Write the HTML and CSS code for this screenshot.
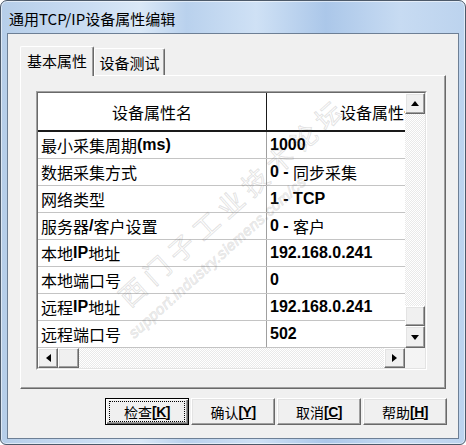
FILE: index.html
```html
<!DOCTYPE html>
<html lang="zh-CN">
<head>
  <meta charset="UTF-8">
  <title>通用TCP/IP设备属性编辑</title>
  <link rel="stylesheet" href="styles.css">
</head>
<body>

<div class="window">
  <div class="titlebar">通用TCP/IP设备属性编辑</div>

  <div class="client">
    <div class="tabs">
      <div class="tab active">基本属性</div>
      <div class="tab second">设备测试</div>
    </div>

    <div class="tab-body">
      <div class="grid">
        <div class="grid-inner">
          <div class="grid-main">
            <div class="grid-view">
              <div class="row head">
                <div class="cell">设备属性名</div>
                <div class="cell">设备属性值</div>
              </div>
              <div class="row">
                <div class="cell">最小采集周期<b>(ms)</b></div>
                <div class="cell"><b>1000</b></div>
              </div>
              <div class="row">
                <div class="cell">数据采集方式</div>
                <div class="cell"><b>0 -</b>&nbsp;同步采集</div>
              </div>
              <div class="row">
                <div class="cell">网络类型</div>
                <div class="cell"><b>1 - TCP</b></div>
              </div>
              <div class="row">
                <div class="cell">服务器<b>/</b>客户设置</div>
                <div class="cell"><b>0 -</b>&nbsp;客户</div>
              </div>
              <div class="row">
                <div class="cell">本地<b>IP</b>地址</div>
                <div class="cell"><b>192.168.0.241</b></div>
              </div>
              <div class="row">
                <div class="cell">本地端口号</div>
                <div class="cell"><b>0</b></div>
              </div>
              <div class="row">
                <div class="cell">远程<b>IP</b>地址</div>
                <div class="cell"><b>192.168.0.241</b></div>
              </div>
              <div class="row">
                <div class="cell">远程端口号</div>
                <div class="cell"><b>502</b></div>
              </div>
            </div>

            <!-- vertical scrollbar -->
            <div class="vscroll">
              <div class="sbtn up"><span class="arr arr-up"></span></div>
              <div class="track vtrack">
                <div class="sbtn vthumb"></div>
              </div>
              <div class="sbtn down"><span class="arr arr-down"></span></div>
            </div>
          </div>

          <!-- horizontal scrollbar -->
          <div class="hscroll">
            <div class="sbtn left"><span class="arr arr-left"></span></div>
            <div class="sbtn hthumb"></div>
            <div class="track htrack"></div>
            <div class="sbtn right"><span class="arr arr-right"></span></div>
            <div class="corner"></div>
          </div>
        </div>
      </div>

      <!-- forum watermark -->
      <div class="watermark">
        <span class="wm-big">西门子工业技术论坛</span>
        <span class="wm-small">support.industry.siemens.com/cs</span>
      </div>
    </div>

    <div class="actions">
      <div class="btn default">检查<b>[<u>K</u>]</b></div>
      <div class="btn">确认<b>[<u>Y</u>]</b></div>
      <div class="btn">取消<b>[<u>C</u>]</b></div>
      <div class="btn">帮助<b>[<u>H</u>]</b></div>
    </div>
  </div>
</div>

</body>
</html>
```

FILE: styles.css
```css
/* Base */
* {
  box-sizing: border-box;
}

body {
  margin: 0;
  background: #ffffff;
  font-family: "Liberation Sans", "Noto Sans CJK SC", sans-serif;
  color: #000;
}

b {
  font-family: "Liberation Sans", sans-serif;
  font-weight: bold;
}

/* Window frame (aero) */
.window {
  width: 466px;
  height: 445px;
  border: 1px solid #4d5a6a;
  border-radius: 7px 7px 6px 6px;
  background: linear-gradient(90deg, #b6cee9 0%, #c9dcf2 18%, #dae8f7 30%, #b9d1ed 40%, #cfe1f5 55%, #abc7e9 70%, #c7dbf2 86%, #bcd3ee 100%);
  box-shadow: inset 0 0 0 1px rgba(255, 255, 255, 0.55);
  padding: 0 6px 5px 6px;
  display: flex;
  flex-direction: column;
  overflow: hidden;
}

.titlebar {
  height: 32px;
  padding: 3px 0 0 2px;
  display: flex;
  align-items: center;
  font-family: "Noto Sans CJK SC", sans-serif;
  font-size: 15px;
  white-space: nowrap;
}

.client {
  flex: 1;
  border: 1px solid #6d7f95;
  background: #f0f0f0;
  padding: 12px 12px 0 12px;
  display: flex;
  flex-direction: column;
}

/* Tabs */
.tabs {
  display: flex;
  align-items: flex-end;
  height: 29px;
  position: relative;
  z-index: 2;
}

.tab {
  height: 27px;
  border: 1px solid;
  border-color: #fff #696969 transparent #fff;
  border-bottom: none;
  border-radius: 2px 2px 0 0;
  box-shadow: inset -1px 0 #a0a0a0;
  background: #f0f0f0;
  font-family: "Noto Sans CJK SC", sans-serif;
  font-size: 15px;
  display: flex;
  align-items: center;
  justify-content: center;
}

.tab.active {
  width: 74px;
  height: 30px;
  margin-bottom: -1px;
  padding-bottom: 2px;
}

.tab.second {
  width: 71px;
  padding-top: 1px;
}

.tab-body {
  width: 426px;
  height: 314px;
  border: 1px solid;
  border-color: #fff #696969 #696969 #fff;
  box-shadow: inset -1px -1px #a0a0a0;
  padding: 15px;
  position: relative;
}

/* Property grid */
.grid {
  width: 391px;
  height: 279px;
  border: 1px solid;
  border-color: #a0a0a0 #fff #fff #a0a0a0;
}

.grid-inner {
  height: 100%;
  border: 1px solid;
  border-color: #696969 #e3e3e3 #e3e3e3 #696969;
  display: flex;
  flex-direction: column;
}

.grid-main {
  display: flex;
  height: 255px;
}

.grid-view {
  width: 367px;
  overflow: hidden;
  background: #fff;
}

.row {
  display: grid;
  grid-template-columns: 229px 226px;
  width: 455px;
  height: 27px;
  border-bottom: 1px solid #c4c4c4;
}

.cell {
  padding: 0 3px;
  display: flex;
  align-items: center;
  font-size: 16px;
  white-space: nowrap;
  overflow: hidden;
}

.cell:first-child {
  border-right: 1px solid #a0a0a0;
}

.row.head {
  height: 39px;
  border-bottom: 2px solid #1a1a1a;
}

.head .cell {
  justify-content: center;
  padding-top: 1px;
}

.head .cell:first-child {
  border-right-color: #1a1a1a;
}

/* Scrollbars */
.sbtn {
  background: #f0f0f0;
  border: 1px solid;
  border-color: #fff #696969 #696969 #fff;
  box-shadow: inset -1px -1px #a0a0a0, inset 1px 1px #e3e3e3;
  display: flex;
  align-items: center;
  justify-content: center;
  flex-shrink: 0;
}

.track {
  background: repeating-conic-gradient(#ffffff 0 25%, #e9e9e9 0 50%) 0 0 / 2px 2px;
}

.vscroll {
  width: 20px;
  display: flex;
  flex-direction: column;
}

.sbtn.up {
  height: 21px;
}

.vtrack {
  flex: 1;
  display: flex;
  flex-direction: column;
  justify-content: flex-end;
}

.sbtn.vthumb {
  height: 20px;
}

.sbtn.down {
  height: 22px;
}

.hscroll {
  height: 20px;
  display: flex;
}

.sbtn.left {
  width: 20px;
}

.sbtn.hthumb {
  width: 21px;
}

.htrack {
  flex: 1;
}

.sbtn.right {
  width: 21px;
}

.corner {
  width: 20px;
  background: #f4f4f4;
}

.arr {
  width: 0;
  height: 0;
}

.arr-up {
  border-left: 4px solid transparent;
  border-right: 4px solid transparent;
  border-bottom: 5px solid #000;
  margin-bottom: 1px;
}

.arr-down {
  border-left: 4px solid transparent;
  border-right: 4px solid transparent;
  border-top: 5px solid #000;
}

.arr-left {
  border-top: 4px solid transparent;
  border-bottom: 4px solid transparent;
  border-right: 5px solid #000;
}

.arr-right {
  border-top: 4px solid transparent;
  border-bottom: 4px solid transparent;
  border-left: 5px solid #000;
}

/* Watermark over the grid */
.watermark {
  position: absolute;
  left: 91px;
  top: 213px;
  transform: rotate(-42deg);
  transform-origin: 0 0;
  pointer-events: none;
  display: flex;
  flex-direction: column;
  white-space: nowrap;
}

.wm-big {
  font-family: "Noto Sans CJK SC", sans-serif;
  font-size: 26px;
  line-height: 30px;
  letter-spacing: 7px;
  color: transparent;
  -webkit-text-stroke: 1px rgba(110, 110, 110, 0.2);
}

.wm-small {
  font-family: "Liberation Sans", sans-serif;
  font-style: italic;
  font-size: 15px;
  line-height: 18px;
  color: transparent;
  -webkit-text-stroke: 1px rgba(110, 110, 110, 0.18);
  margin: 8px 0 0 -17px;
  letter-spacing: 0.5px;
}

/* Dialog buttons */
.actions {
  display: flex;
  justify-content: flex-end;
  gap: 2px;
  margin: 9px -1px 0 0;
}

.btn {
  width: 84px;
  height: 27px;
  background: #f0f0f0;
  border: 1px solid;
  border-color: #fff #696969 #696969 #fff;
  box-shadow: inset -1px -1px #a0a0a0, inset 1px 1px #e3e3e3;
  font-family: "Noto Sans CJK SC", sans-serif;
  font-size: 14px;
  display: flex;
  align-items: center;
  justify-content: center;
  position: relative;
}

.btn b {
  font-size: 14px;
  letter-spacing: -0.5px;
}

.btn.default {
  border: 1px solid #000;
  box-shadow: inset 1px 1px #fff, inset -1px -1px #696969, inset -2px -2px #a0a0a0;
}

.btn.default::after {
  content: "";
  position: absolute;
  top: 2px;
  left: 3px;
  right: 3px;
  bottom: 2px;
  border: 1px dotted #000;
}
```
